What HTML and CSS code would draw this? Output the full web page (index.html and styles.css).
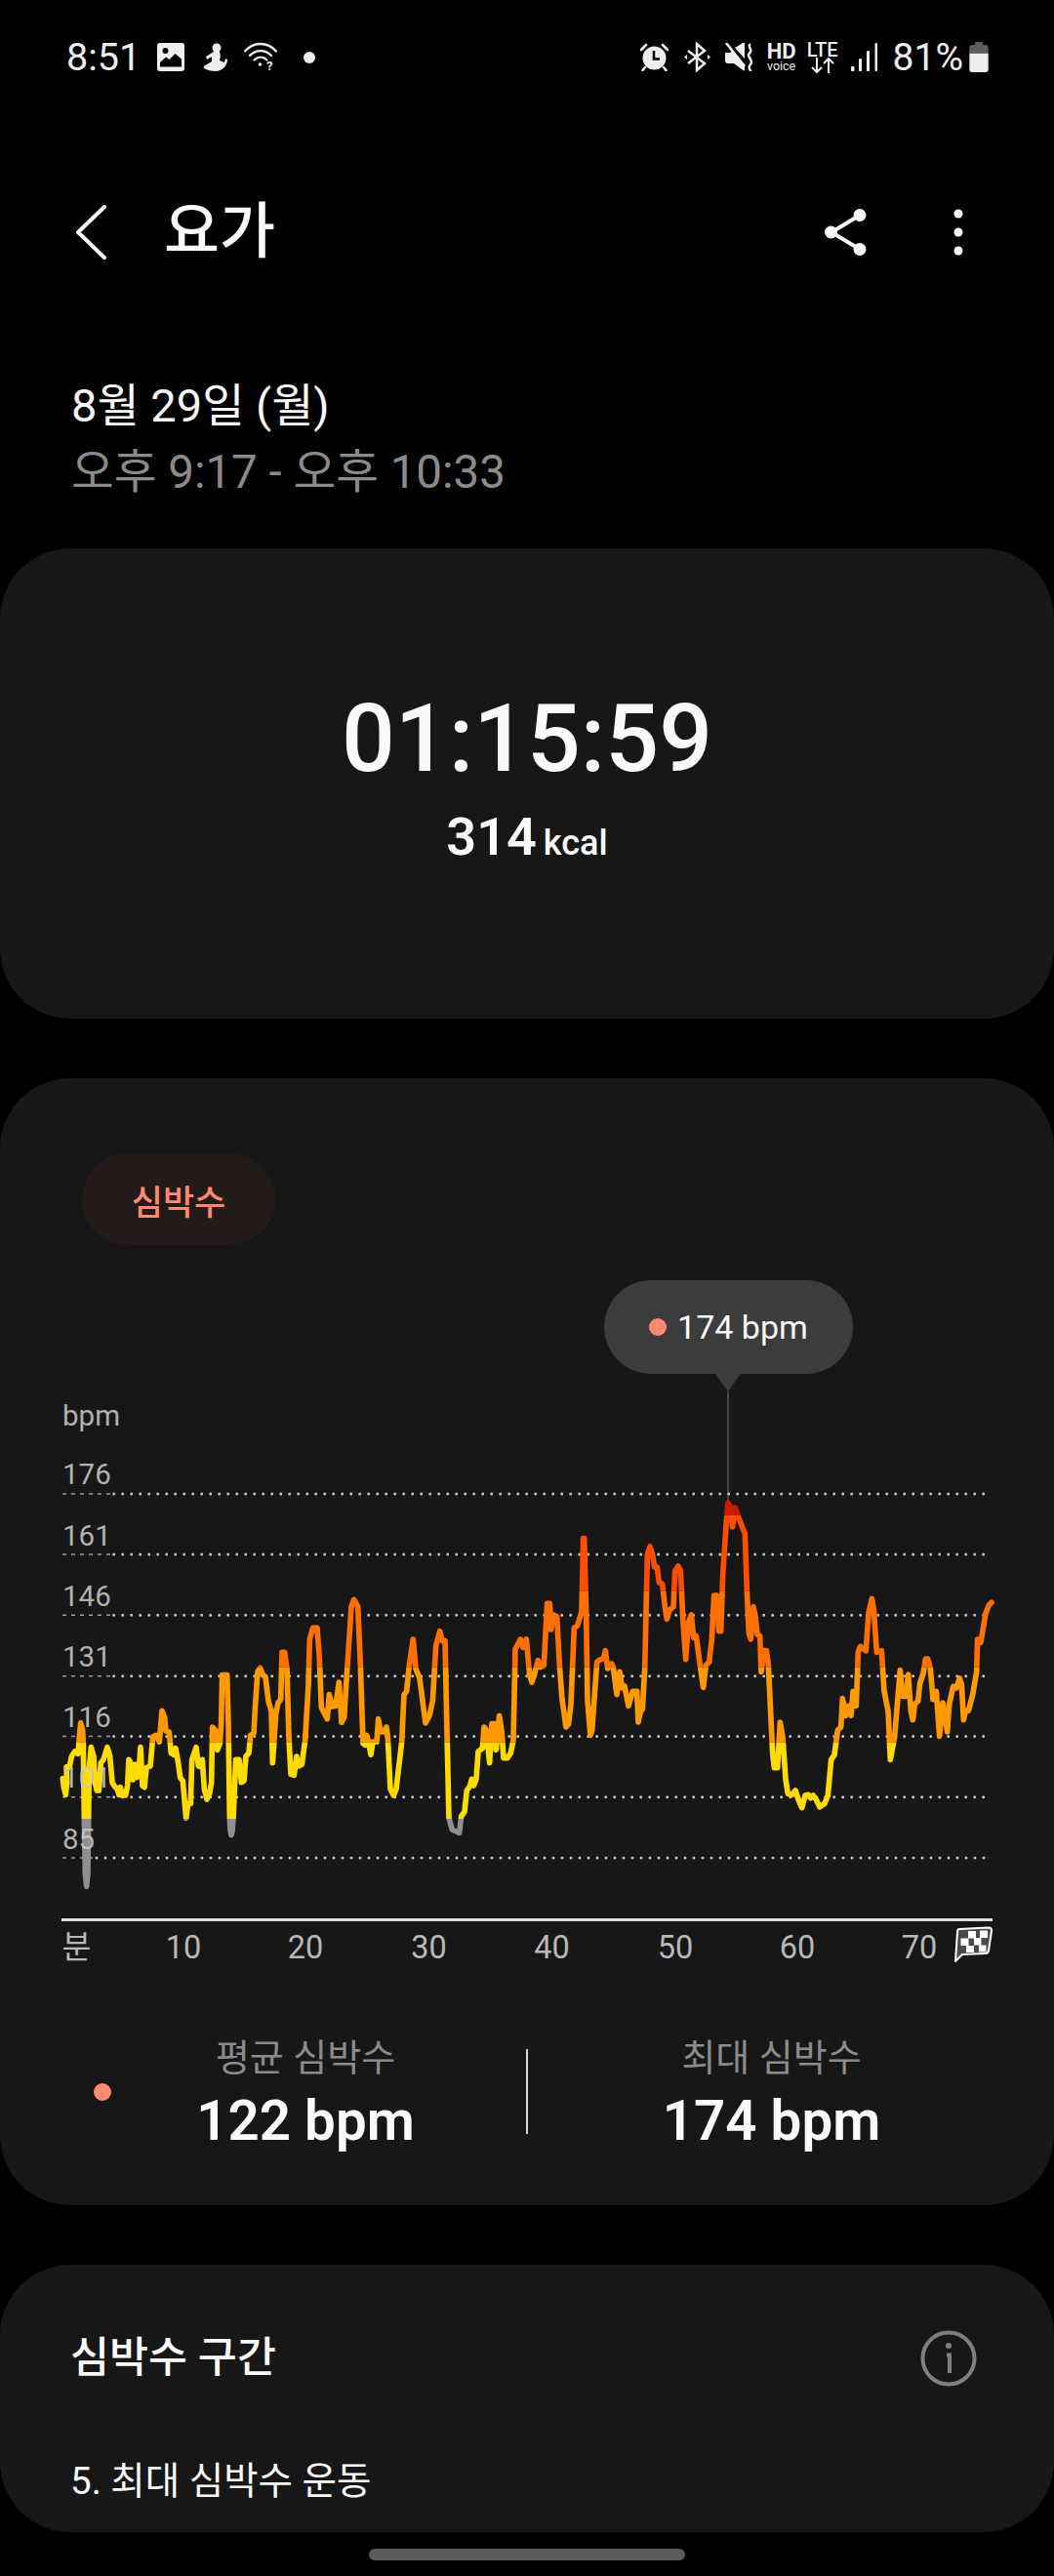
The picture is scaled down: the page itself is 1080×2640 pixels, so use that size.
FILE: index.html
```html
<!DOCTYPE html>
<html lang="ko">
<head>
<meta charset="utf-8">
<title>요가</title>
<link rel="stylesheet" href="styles.css">
</head>
<body>
<div class="phone">
  <header class="status">
    <div class="status-left">
      <span class="clock">8:51</span>
      <svg class="si-photo" width="28" height="29" viewBox="0 0 28 29"><path fill="#eee" fill-rule="evenodd" d="M3 0h22a3 3 0 0 1 3 3v23a3 3 0 0 1-3 3H3a3 3 0 0 1-3-3V3a3 3 0 0 1 3-3zM3 24.500h22v-8l-6.500-5.500-6 6-3.500-2.500-6 5.500zM8.500 5a3 3 0 1 0 0 6 3 3 0 0 0 0-6z"/></svg>
      <svg class="si-figure" width="26" height="29" viewBox="0 0 26 29"><circle cx="14" cy="5" r="4.500" fill="#eee"/><path fill="#eee" d="M3 14l8-5h6c1 3 1 6 0 9l5 2 1-4 2 1c0 7-6 12-12 12-4 0-9-1-12-3-1-2 1-3 3-4l5-3v-5l-5 3z"/></svg>
      <svg class="si-wifi" width="34" height="32" viewBox="0 0 34 32" fill="none" stroke="#eee" stroke-width="2.300" stroke-linecap="round"><path d="M1 9.500c9-10 23-10 32 0"/><path d="M6 14c6-6.500 16-6.500 22 0"/><path d="M10.500 18.500c4-3.800 9-3.800 13 0"/><circle cx="16.500" cy="23" r="1.800" fill="#eee" stroke="none"/><text x="23" y="29" class="si-q">?</text></svg>
      <span class="status-dot"></span>
    </div>
    <div class="status-right">
      <svg class="si-alarm" width="29" height="29" viewBox="0 0 29 29"><circle cx="14.500" cy="15.500" r="12" fill="#eee"/><path d="M14 8v8.500h6" fill="none" stroke="#000" stroke-width="2.600"/><path d="M1 7l5-5M28 7l-5-5M5 25l-2.500 3M24 25l2.500 3" stroke="#eee" stroke-width="2.600" stroke-linecap="round"/></svg>
      <svg class="si-bt" width="27" height="31" viewBox="0 0 27 31" fill="none" stroke="#eee" stroke-width="2.500"><path d="M4 9l17 13-8 7V2l8 7L4 22"/><path d="M0 15.500l3-2.500v5zM27 15.500l-3-2.500v5z" fill="#eee" stroke="none"/></svg>
      <svg class="si-mute" width="29" height="29" viewBox="0 0 29 29"><path fill="#eee" d="M0 10h4l3-1 13 13v6l-1 .5L9 21H3a3 3 0 0 1-3-3zM10 5l8-5h2v16z"/><path d="M1 0l19 24" stroke="#eee" stroke-width="2.600"/><path d="M26 1c-4 3 2 5 0 8s-3 3-1 6 3 5 1 7-2 5 1 7" fill="none" stroke="#eee" stroke-width="2.400"/></svg>
      <span class="stack stack-hd"><span class="hd">HD</span><span class="voice">voice</span></span>
      <span class="stack stack-lte"><span class="lte">LTE</span>
        <svg width="24" height="16" viewBox="0 0 24 16" fill="none" stroke="#eee" stroke-width="2"><path d="M6 0v15M1 10l5 5 5-5M18 16V1M13 6l5-5 5 5"/></svg></span>
      <svg class="si-signal" width="27" height="29" viewBox="0 0 27 29"><rect x="0" y="24" width="3.500" height="5" rx="1" fill="#eee"/><rect x="8" y="16" width="3" height="13" rx="1" fill="#eee"/><rect x="16" y="8" width="3" height="21" rx="1" fill="#eee"/><rect x="24.500" y="0" width="2.500" height="29" rx="1" fill="#eee"/></svg>
      <span class="pct">81%</span>
      <svg class="si-batt" width="20" height="31" viewBox="0 0 20 32"><path fill="#5c5c5c" d="M6 0h8v3h3a3 3 0 0 1 3 3v6H0V6a3 3 0 0 1 3-3h3z"/><path fill="#eee" d="M0 12h20v17a3 3 0 0 1-3 3H3a3 3 0 0 1-3-3z"/></svg>
    </div>
  </header>

  <nav class="appbar">
    <svg class="back" width="32" height="56" viewBox="0 0 32 56" fill="none" stroke="#fafafa" stroke-width="4" stroke-linecap="round" stroke-linejoin="round"><path d="M30 2L3 28l27 26"/></svg>
    <h1 class="title">요가</h1>
    <svg class="share" width="44" height="50" viewBox="0 0 44 50" fill="none" stroke="#fafafa" stroke-width="4"><path d="M36 7.500L7 25l29 17.500"/><circle cx="36" cy="7.500" r="6.500" fill="#fafafa" stroke="none"/><circle cx="6.500" cy="25" r="6.500" fill="#fafafa" stroke="none"/><circle cx="36" cy="42.500" r="6.500" fill="#fafafa" stroke="none"/></svg>
    <svg class="more" width="10" height="50" viewBox="0 0 10 50" fill="#fafafa"><circle cx="5" cy="6" r="4.500"/><circle cx="5" cy="25" r="4.500"/><circle cx="5" cy="44" r="4.500"/></svg>
  </nav>

  <section class="when">
    <p class="when-date">8월 29일 (월)</p>
    <p class="when-time">오후 9:17 - 오후 10:33</p>
  </section>

  <section class="card summary">
    <p class="duration">01:15:59</p>
    <p class="energy"><span class="energy-num">314</span> <span class="energy-unit">kcal</span></p>
  </section>

  <section class="card heart">
    <span class="pill">심박수</span>
    <div class="chart">
      <svg class="plot" width="1080" height="720" viewBox="0 1300 1080 720">
        <defs>
          <g id="hr-line" fill="none" stroke-width="17" stroke-linejoin="round" stroke-linecap="round">
            <path transform="translate(60 1600) scale(.33333)" d="M13 668L16 695 22 718 26 680 24 632 34 630 40 600 50 585 60 592 64 540 68 497 74 520 76 560 79 790 82 960 86 1000 90 960 92 800 94 640 100 572 108 600 112 680 118 705 124 705 130 620 138 610 150 572 158 600 165 680 172 692 180 700 186 718 190 695 196 720 206 720 212 690 216 610 222 620 228 672 236 625 240 665 246 660 252 572 258 690 264 695 270 635 282 630 290 540 300 535 310 555 318 460 326 480 330 522 340 525 346 590 354 595 360 575 368 620 374 665 382 675 392 790 398 745 406 745 410 610 423 572 430 630 438 632 442 610 448 700 456 732 464 715 470 680 473 510 482 520 488 580 496 560 500 500 503 350 518 350 522 500 526 790 528 830 531 842 534 830 537 790 545 610 555 610 562 680 570 675 576 600 585 590 590 535 600 530 605 440 612 340 620 328 628 350 636 355 645 430 654 460 658 620 668 470 675 435 683 425 687 280 695 280 702 330 708 540 714 655 724 658 732 600 738 630 748 625 758 550 768 380 772 240 782 205 795 205 802 300 808 450 826 485 832 410 842 447 852 445 862 372 870 495"/>
            <path transform="translate(350 1540) scale(.33333)" d="M0 675L8 660 14 560 30 320 38 298 50 320 58 500 66 740 72 745 76 715 82 730 90 775 96 735 108 735 113 665 120 705 130 705 138 690 142 720 150 880 160 900 168 880 185 735 192 590 200 580 208 500 220 420 228 510 240 540 258 678 270 655 280 610 290 440 302 395 310 425 318 425 325 750 330 970 340 1005 362 1015 368 965 378 950 385 885 395 870 400 850 406 870 414 850 420 765 433 755 438 690 445 700 455 800 462 680 470 680 475 760 485 655 492 700 498 785 510 785 520 770 528 730 534 450 550 420 558 445 568 420 578 530 585 552 592 530 604 485 612 505 622 500 632 310 640 310 644 390 652 345 662 350 670 500 678 605 690 690 698 680 705 620 715 385 725 378 738 335 743 110 746 110 752 340 756 610 765 715 770 700 785 490 795 482 805 480 811 455 818 510 830 495 835 505 846 590 855 520 862 570 870 565"/>
            <path transform="translate(640 1530) scale(.33333)" d="M0 595L12 655 25 610 38 610 42 705 48 675 55 665 62 540 70 190 78 165 86 190 92 228 100 228 106 275 116 280 124 350 130 388 138 360 150 350 155 240 165 225 172 240 180 400 188 512 196 400 205 375 212 445 220 440 232 530 242 598 250 530 260 520 268 450 275 315 283 315 290 425 296 425 302 250 312 100 318 30 324 40 332 105 340 45 348 70 358 95 370 125 376 300 382 430 388 450 396 350 402 380 408 435 416 440 420 550 428 485 436 485 442 530 455 800 460 845 470 845 478 705 486 750 495 880 502 925 515 928 525 915 535 945 545 968 555 930 565 928 572 938 580 930 590 945 600 965"/>
            <path transform="translate(780 1610) scale(.33333)" d="M180 725L195 715 205 690 215 580 225 565 235 490 245 480 250 392 260 445 268 415 276 445 282 370 292 415 298 250 305 232 322 245 330 130 340 85 346 120 355 250 370 245 378 370 390 430 397 580 410 510 427 305 434 385 445 385 452 318 460 430 466 458 472 410 482 400 488 345 498 315 505 270 512 270 520 300 528 395 538 370 548 508 558 405 572 495 578 410 590 355 600 360 610 330 616 350 622 458 628 430 637 430 650 380 662 310 665 210 675 220 690 130 700 105 708 97"/>
          </g>
          <clipPath id="b0"><rect x="0" y="1300" width="1080" height="252.700"/></clipPath>
          <clipPath id="b1"><rect x="0" y="1552.700" width="1080" height="78"/></clipPath>
          <clipPath id="b2"><rect x="0" y="1630.700" width="1080" height="78"/></clipPath>
          <clipPath id="b3"><rect x="0" y="1708.700" width="1080" height="77"/></clipPath>
          <clipPath id="b4"><rect x="0" y="1785.700" width="1080" height="78.300"/></clipPath>
          <clipPath id="b5"><rect x="0" y="1864" width="1080" height="100"/></clipPath>
        </defs>

        <line class="cursor" x1="746" y1="1426" x2="746" y2="1546"/>

        <g class="grid-soft">
          <line x1="64" x2="113" y1="1531" y2="1531"/><line x1="64" x2="113" y1="1593" y2="1593"/>
          <line x1="64" x2="113" y1="1655.300" y2="1655.300"/><line x1="64" x2="113" y1="1717.700" y2="1717.700"/>
          <line x1="64" x2="113" y1="1779.500" y2="1779.500"/><line x1="64" x2="113" y1="1841.700" y2="1841.700"/>
          <line x1="64" x2="95" y1="1904" y2="1904"/>
        </g>
        <g class="grid">
          <line x1="116.700" x2="1010" y1="1531" y2="1531"/><line x1="116.700" x2="1010" y1="1593" y2="1593"/>
          <line x1="116.700" x2="1010" y1="1655.300" y2="1655.300"/><line x1="116.700" x2="1010" y1="1717.700" y2="1717.700"/>
          <line x1="116.700" x2="1010" y1="1779.500" y2="1779.500"/><line x1="116.700" x2="1010" y1="1841.700" y2="1841.700"/>
          <line x1="99" x2="1010" y1="1904" y2="1904"/>
        </g>

        <g clip-path="url(#b0)"><use href="#hr-line" class="hr-deep"/></g>
        <g clip-path="url(#b1)"><use href="#hr-line" class="hr-red"/></g>
        <g clip-path="url(#b2)"><use href="#hr-line" class="hr-dark"/></g>
        <g clip-path="url(#b3)"><use href="#hr-line" class="hr-orange"/></g>
        <g clip-path="url(#b4)"><use href="#hr-line" class="hr-yellow"/></g>
        <g clip-path="url(#b5)"><use href="#hr-line" class="hr-gray"/></g>

        <g class="ylabels">
          <text x="64" y="1461">bpm</text>
          <text x="64" y="1521">176</text>
          <text x="64" y="1584">161</text>
          <text x="64" y="1646">146</text>
          <text x="64" y="1708">131</text>
          <text x="64" y="1770">116</text>
          <text x="64" y="1832">101</text>
          <text x="64" y="1895">85</text>
        </g>

        <line class="axis" x1="63" x2="1017" y1="1967.500" y2="1967.500"/>
        <g class="xlabels">
          <text x="78.500" y="2007" class="xl-unit">분</text>
          <text x="188" y="2007">10</text>
          <text x="313" y="2007">20</text>
          <text x="439.500" y="2007">30</text>
          <text x="565.500" y="2007">40</text>
          <text x="692" y="2007">50</text>
          <text x="817" y="2007">60</text>
          <text x="942" y="2007">70</text>
        </g>
        <path class="flag" d="M983 1977L1013 1975.500Q1016.500 1975.500 1016 1979L1013 1999Q1012.500 2002 1009 2002L986 2003L979 2010L981 1980Q981 1977 983 1977Z"/>
        <g class="flag-sq">
          <rect x="992" y="1979" width="8" height="7.500"/><rect x="1004" y="1978.500" width="8" height="7.500"/>
          <rect x="984.500" y="1986.500" width="8" height="7.500"/><rect x="998" y="1986" width="7.500" height="7.500"/>
          <rect x="990" y="1994" width="8" height="7"/><rect x="1003" y="1993.500" width="7.500" height="7"/>
        </g>
      </svg>
      <div class="tip"><span class="tip-dot"></span><span>174 bpm</span></div>
    </div>
    <div class="stats">
      <span class="stats-dot"></span>
      <div class="stat stat-a">
        <p class="stat-label">평균 심박수</p>
        <p class="stat-value">122 bpm</p>
      </div>
      <span class="stats-rule"></span>
      <div class="stat stat-b">
        <p class="stat-label">최대 심박수</p>
        <p class="stat-value">174 bpm</p>
      </div>
    </div>
  </section>

  <section class="card zones">
    <div class="zones-head">
      <h2 class="zones-title">심박수 구간</h2>
      <svg class="info" width="58" height="58" viewBox="0 0 58 58" fill="none" stroke="#7f7f7f" stroke-width="4"><circle cx="29" cy="29" r="26.500"/><path d="M27 25.500h3V44" stroke-width="4"/><circle cx="29" cy="16" r="3" fill="#7f7f7f" stroke="none"/></svg>
    </div>
    <p class="zones-row">5. 최대 심박수 운동</p>
  </section>

  <div class="home"><span class="home-bar"></span></div>
</div>
</body>
</html>
```

FILE: styles.css
```css
* { box-sizing: border-box; }
html, body { margin: 0; padding: 0; background: #000; }
body { font-family: Roboto, "Noto Sans CJK KR", sans-serif; color: #fafafa; }
p, h1, h2 { margin: 0; font-weight: 400; }
.phone { width: 1080px; height: 2640px; overflow: hidden; }

.status { height: 117px; display: flex; justify-content: space-between; align-items: center; padding: 0 67px 0 68px; color: #eee; }
.status-left, .status-right { display: flex; align-items: center; }
.clock { font-size: 39.500px; font-weight: 400; line-height: 44px; }
.pct { font-size: 39px; font-weight: 400; line-height: 44px; }
.si-photo { margin-left: 17px; }
.si-figure { margin-left: 19px; }
.si-wifi { margin-left: 16px; }
.si-q { font: 700 13px Roboto, sans-serif; fill: #eee; stroke: none; }
.status-dot { width: 12px; height: 12px; border-radius: 50%; background: #eee; margin-left: 27px; }
.si-bt { margin-left: 16px; }
.si-mute { margin-left: 15px; }
.stack { display: flex; flex-direction: column; align-items: center; width: 32px; }
.stack-hd { margin-left: 13px; }
.stack-lte { margin-left: 10px; }
.hd { font-size: 22px; font-weight: 700; line-height: 18px; }
.voice { font-size: 12.500px; line-height: 12px; }
.lte { font-size: 20px; font-weight: 500; line-height: 16px; }
.si-signal { margin-left: 13px; }
.pct { margin-left: 16px; }
.si-batt { margin-left: 6px; }

.appbar { height: 242px; display: flex; align-items: center; padding-left: 77px; }
.title { font-size: 62px; font-weight: 500; line-height: 74px; margin-left: 59px; flex: 1; }
.more { margin-left: 88px; margin-right: 93px; }

.when { padding: 23px 0 44px 73px; }
.when-date { font-size: 47px; line-height: 68px; }
.when-time { font-size: 47.500px; line-height: 68px; color: #8b8b8b; }

.card { background: #171717; border-radius: 72px; margin-bottom: 61px; }
.summary { height: 482px; padding-top: 140px; text-align: center; }
.duration { font-size: 96.500px; font-weight: 500; line-height: 110px; }
.energy { line-height: 64px; margin-top: 14px; }
.energy-num { font-size: 54px; font-weight: 600; }
.energy-unit { font-size: 36px; font-weight: 500; margin-left: 3px; }

.heart { height: 1155px; padding-top: 77px; }
.pill { display: flex; align-items: center; justify-content: center; width: 198px; height: 94px; margin-left: 84px; border-radius: 47px; background: #231b1a; color: #ff8a72; font-size: 35px; font-weight: 500; }
.chart { position: relative; width: 1080px; height: 720px; margin-top: 24px; }
.plot { display: block; }
.cursor { stroke: #555; stroke-width: 1.500; }
.grid line { stroke: #c4c4c4; stroke-width: 3; stroke-linecap: round; stroke-dasharray: 0 9; }
.grid-soft line { stroke: #9a9a9a; stroke-width: 1.500; stroke-dasharray: 4 5; }
.hr-deep { stroke: #cc1a00; }
.hr-red { stroke: #ff4d00; }
.hr-dark { stroke: #ff7000; }
.hr-orange { stroke: #ff9900; }
.hr-yellow { stroke: #ffdb00; }
.hr-gray { stroke: #8f8f8f; }
.ylabels text { font: 400 29.500px Roboto, sans-serif; fill: #c8c8c8; fill-opacity: .88; }
.axis { stroke: #dedede; stroke-width: 3; }
.xlabels text { font: 400 32.500px Roboto, "Noto Sans CJK KR", sans-serif; fill: #b8b8b8; text-anchor: middle; }
.flag { fill: #4a4a4a; stroke: #fff; stroke-width: 2; stroke-linejoin: round; }
.flag-sq rect { fill: #fff; }

.tip { position: absolute; left: 619px; top: 12px; width: 255px; height: 96px; border-radius: 48px; background: #3c3c3c; display: flex; align-items: center; justify-content: center; gap: 11px; font-size: 34px; }
.tip::after { content: ""; position: absolute; left: 114px; top: 96px; border-style: solid; border-width: 18px 13px 0; border-color: #3c3c3c transparent transparent; }
.tip-dot { width: 18px; height: 18px; border-radius: 50%; background: #ff8a72; }

.stats { display: flex; align-items: center; height: 130px; margin-top: 57px; }
.stats-dot { width: 18px; height: 18px; border-radius: 50%; background: #ff8a72; margin-left: 96px; margin-top: 3px; }
.stat { text-align: center; }
.stat-a { width: 398px; margin-right: 27px; }
.stat-b { width: 500px; }
.stats-rule { width: 1.500px; height: 87px; background: #d8d8d8; margin-top: 3px; }
.stat-label { font-size: 38px; line-height: 64px; color: #8b8b8b; }
.stat-value { font-size: 56.500px; font-weight: 600; line-height: 66px; }

.zones { height: 274px; margin-bottom: 0; padding: 64px 79px 0 72px; }
.zones-head { display: flex; justify-content: space-between; align-items: center; }
.zones-title { font-size: 43.500px; font-weight: 500; line-height: 64px; }
.zones-row { font-size: 38.500px; line-height: 50px; margin-top: 69px; }

.home { height: 45px; display: flex; justify-content: center; padding-top: 17px; }
.home-bar { width: 324px; height: 12px; border-radius: 6px; background: #5a5a5a; }
```
